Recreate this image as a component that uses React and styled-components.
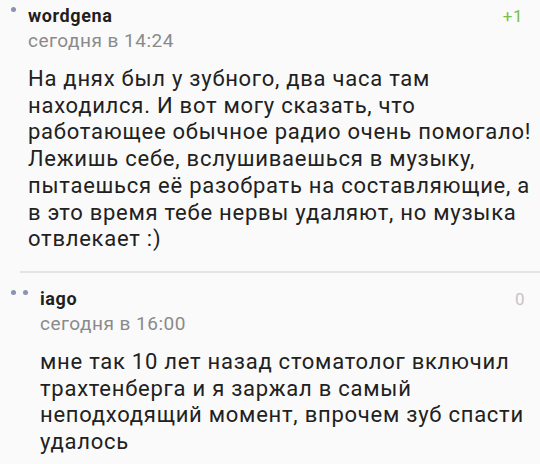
import React from 'react'
import styled, { createGlobalStyle } from 'styled-components'

const Global = createGlobalStyle`
    body{
        margin:0;
        background:#fafafa;
        font-family:Roboto, "Noto Sans", sans-serif;
    }
`
const Lista = styled.div`
    width:540px;
    height:464px;
    overflow:hidden;
    background:#fafafa;
`
const Comentario = styled.div`
    display:flex;
    padding:${p => p.top}px 8px 0 11px;
`
const Puntos = styled.div`
    display:flex;
    gap:7px;
    padding-top:2px;
    width:${p => p.nivel * 12}px;
    flex-shrink:0;
`
const Punto = styled.span`
    width:5px;
    height:5px;
    border-radius:50%;
    background:#8a93b0;
`
const Cuerpo = styled.div`
    flex:1;
    padding-left:5px;
`
const Cabecera = styled.div`
    display:flex;
    justify-content:space-between;
    align-items:baseline;
`
const Autor = styled.span`
    font-weight:bold;
    font-size:18px;
    letter-spacing:0.6px;
    color:#1f1f1f;
    line-height:22px;
`
const Puntaje = styled.span`
    font-size:17px;
    letter-spacing:0.5px;
    padding-right:${p => p.positivo ? 9 : 7}px;
    color:${p => p.positivo ? '#78bf45' : '#c4c4c4'};
`
const Fecha = styled.div`
    font-size:19px;
    letter-spacing:0.5px;
    color:#8a8a8a;
    line-height:25px;
    margin-top:1px;
`
const Texto = styled.p`
    margin:13px 0 0;
    font-size:22px;
    letter-spacing:0.75px;
    line-height:26.7px;
    color:#212121;
`
const Separador = styled.hr`
    border:none;
    height:2px;
    background:#e4e4e4;
    margin:18px 0 0 20px;
`

const comentarios = [
    {
        autor:'wordgena', fecha:'сегодня в 14:24', puntaje:'+1', nivel:1, top:5,
        texto:'На днях был у зубного, два часа там находился. И вот могу сказать, что работающее обычное радио очень помогало! Лежишь себе, вслушиваешься в музыку, пытаешься её разобрать на составляющие, а в это время тебе нервы удаляют, но музыка отвлекает :)'
    },
    {
        autor:'iago', fecha:'сегодня в 16:00', puntaje:'0', nivel:2, top:15,
        texto:'мне так 10 лет назад стоматолог включил трахтенберга и я заржал в самый неподходящий момент, впрочем зуб спасти удалось'
    }
]

export default ()=>(
    <Lista>
        <Global/>
        {comentarios.map((c, i)=>(
            <React.Fragment key={c.autor}>
                {i > 0 && <Separador/>}
                <Comentario top={c.top}>
                    <Puntos nivel={c.nivel}>
                        {Array.from({length:c.nivel}).map((_, j)=><Punto key={j}/>)}
                    </Puntos>
                    <Cuerpo>
                        <Cabecera>
                            <Autor>{c.autor}</Autor>
                            <Puntaje positivo={c.puntaje !== '0'}>{c.puntaje}</Puntaje>
                        </Cabecera>
                        <Fecha>{c.fecha}</Fecha>
                        <Texto>{c.texto}</Texto>
                    </Cuerpo>
                </Comentario>
            </React.Fragment>
        ))}
    </Lista>
)
